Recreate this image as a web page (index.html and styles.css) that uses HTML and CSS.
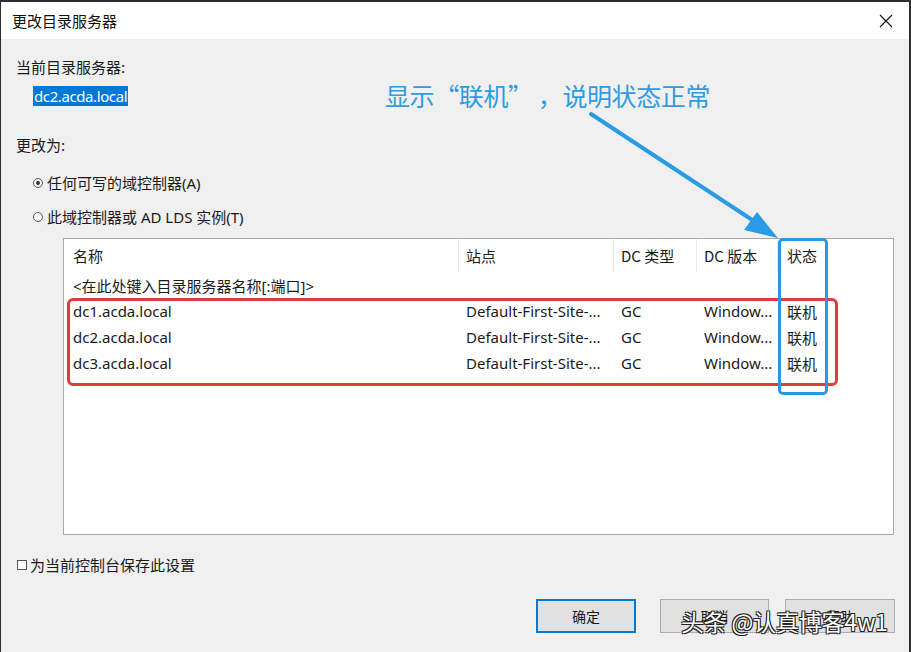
FILE: index.html
```html
<!DOCTYPE html>
<html lang="zh-CN">
<head>
    <meta charset="UTF-8">
    <meta name="viewport" content="width=device-width, initial-scale=1.0">
    <title>更改目录服务器</title>
    <link rel="stylesheet" href="styles.css">
</head>
<body>
    <div class="window">
        <div class="titlebar">
            <span class="title">更改目录服务器</span>
            <span class="close">
                <svg width="14" height="14" viewBox="0 0 14 14"><path d="M1 1L13 13M13 1L1 13" stroke="#111" stroke-width="1.1" fill="none"/></svg>
            </span>
        </div>

        <div class="content">
            <div class="label current-label">当前目录服务器:</div>
            <div class="current-server"><span class="selected">dc2.acda.local</span></div>

            <div class="label change-label">更改为:</div>

            <div class="option option-first">
                <span class="radio checked"></span>
                <span>任何可写的域控制器(A)</span>
            </div>
            <div class="option">
                <span class="radio"></span>
                <span>此域控制器或 AD LDS 实例(T)</span>
            </div>

            <div class="list">
                <div class="list-row list-header">
                    <div class="col">名称</div>
                    <div class="col">站点</div>
                    <div class="col">DC 类型</div>
                    <div class="col">DC 版本</div>
                    <div class="col">状态</div>
                </div>
                <div class="list-row">
                    <div class="col">&lt;在此处键入目录服务器名称[:端口]&gt;</div>
                    <div class="col"></div>
                    <div class="col"></div>
                    <div class="col"></div>
                    <div class="col"></div>
                </div>
                <div class="list-row">
                    <div class="col">dc1.acda.local</div>
                    <div class="col">Default-First-Site-...</div>
                    <div class="col">GC</div>
                    <div class="col">Window...</div>
                    <div class="col">联机</div>
                </div>
                <div class="list-row">
                    <div class="col">dc2.acda.local</div>
                    <div class="col">Default-First-Site-...</div>
                    <div class="col">GC</div>
                    <div class="col">Window...</div>
                    <div class="col">联机</div>
                </div>
                <div class="list-row">
                    <div class="col">dc3.acda.local</div>
                    <div class="col">Default-First-Site-...</div>
                    <div class="col">GC</div>
                    <div class="col">Window...</div>
                    <div class="col">联机</div>
                </div>
            </div>

            <div class="save-setting">
                <span class="checkbox"></span>
                <span>为当前控制台保存此设置</span>
            </div>

            <div class="buttons">
                <button class="btn btn-default">确定</button>
                <button class="btn btn-cancel">取消</button>
                <button class="btn">帮助</button>
            </div>

            <!-- annotation overlays -->
            <div class="note">显示“联机” ，说明状态正常</div>
            <svg class="arrow" width="911" height="260" viewBox="0 0 911 260">
                <line x1="590" y1="75" x2="762" y2="188" stroke="#2b9be6" stroke-width="4" stroke-linecap="round"/>
                <polygon points="777,199 743,191 756,173" fill="#2b9be6"/>
            </svg>
            <div class="mark mark-red"></div>
            <div class="mark mark-blue"></div>
        </div>

        <div class="watermark">头条 @认真博客4w1</div>
    </div>
</body>
</html>
```

FILE: styles.css
```css
body {
    margin: 0;
    font-family: "Noto Sans", "Noto Sans CJK SC", sans-serif;
    font-size: 15px;
    color: #1a1a1a;
    background-color: #2b2f33;
}

.window {
    position: relative;
    width: 908px;
    height: 650px;
    margin-top: 2px;
    margin-left: 1px;
    display: flex;
    flex-direction: column;
    background-color: #f0f0f0;
    overflow: hidden;
}

.titlebar {
    height: 37px;
    background-color: #fff;
    display: flex;
    align-items: center;
    justify-content: space-between;
    padding: 0 16px 0 11px;
}

.title {
    font-family: "Noto Sans CJK SC", sans-serif;
    font-size: 15px;
    color: #111;
}

.close {
    display: flex;
    margin-top: 1px;
}

.content {
    position: relative;
    flex: 1;
    padding: 0 15px;
}

.label {
    font-family: "Noto Sans CJK SC", sans-serif;
    line-height: 20px;
}

.current-label {
    margin-top: 18px;
}

.current-server {
    margin-top: 9px;
    padding-left: 17px;
    line-height: 20px;
}

.selected {
    background-color: #0078d7;
    color: #fff;
    padding: 0 1px;
    letter-spacing: -0.4px;
}

.change-label {
    margin-top: 29px;
}

.option {
    display: flex;
    align-items: center;
    gap: 4px;
    margin-top: 14px;
    padding-left: 17px;
    line-height: 20px;
}

.option-first {
    margin-top: 18px;
}

.radio {
    width: 8px;
    height: 8px;
    border: 1px solid #555;
    border-radius: 50%;
    background-color: #fff;
    position: relative;
}

.radio.checked::after {
    content: "";
    position: absolute;
    left: 2px;
    top: 2px;
    width: 4px;
    height: 4px;
    border-radius: 50%;
    background-color: #333;
}

.list {
    margin: 11px 0 0 47px;
    width: 829px;
    height: 295px;
    background-color: #fff;
    border: 1px solid #a8a8a8;
}

.list-row {
    display: grid;
    grid-template-columns: 395px 155px 83px 81px 1fr;
    height: 26px;
    align-items: center;
}

.list-header {
    height: 33px;
}

.list-header .col {
    height: 33px;
    line-height: 33px;
    border-right: 1px solid #ececec;
    font-family: "Noto Sans CJK SC", sans-serif;
}

.list-header .col:last-child {
    border-right: none;
}

.col {
    padding-left: 9px;
    white-space: nowrap;
    overflow: hidden;
}

.list-row .col:nth-child(2),
.list-row .col:nth-child(3),
.list-row .col:nth-child(4) {
    padding-left: 7px;
}

.save-setting {
    display: flex;
    align-items: center;
    gap: 3px;
    margin-top: 20px;
    padding-left: 1px;
    font-family: "Noto Sans CJK SC", sans-serif;
    line-height: 20px;
}

.checkbox {
    width: 8px;
    height: 8px;
    border: 1px solid #555;
    background-color: #fff;
}

.buttons {
    display: flex;
    justify-content: flex-end;
    gap: 16px;
    margin-top: 24px;
    margin-right: -1px;
}

.btn {
    width: 110px;
    height: 34px;
    background-color: #e1e1e1;
    border: 1px solid #adadad;
    font-family: "Noto Sans CJK SC", sans-serif;
    font-size: 14px;
    color: #1a1a1a;
    padding: 0;
}

.btn-default {
    width: 100px;
    border: 2px solid #0078d7;
    margin-right: 8px;
}

.btn-cancel {
    width: 109px;
}

.note {
    position: absolute;
    left: 384px;
    top: 39px;
    font-family: "Noto Sans CJK SC", sans-serif;
    font-size: 25px;
    line-height: 34px;
    color: #2f9be3;
    letter-spacing: -0.4px;
}

.arrow {
    position: absolute;
    left: 0;
    top: 0;
}

.mark {
    position: absolute;
    border-radius: 6px;
}

.mark-red {
    left: 66px;
    top: 259px;
    width: 765px;
    height: 82px;
    border: 3px solid #e33b3b;
}

.mark-blue {
    left: 777px;
    top: 199px;
    width: 44px;
    height: 151px;
    border: 3px solid #2a97e6;
    border-radius: 5px;
}

.watermark {
    position: absolute;
    left: 680px;
    top: 602px;
    font-family: "Noto Sans CJK SC", sans-serif;
    font-size: 23px;
    line-height: 34px;
    color: #fff;
    letter-spacing: -0.2px;
    text-shadow: 1px 1px 0 #222, -1px -1px 0 #222, 1px -1px 0 #222, -1px 1px 0 #222;
}
```
